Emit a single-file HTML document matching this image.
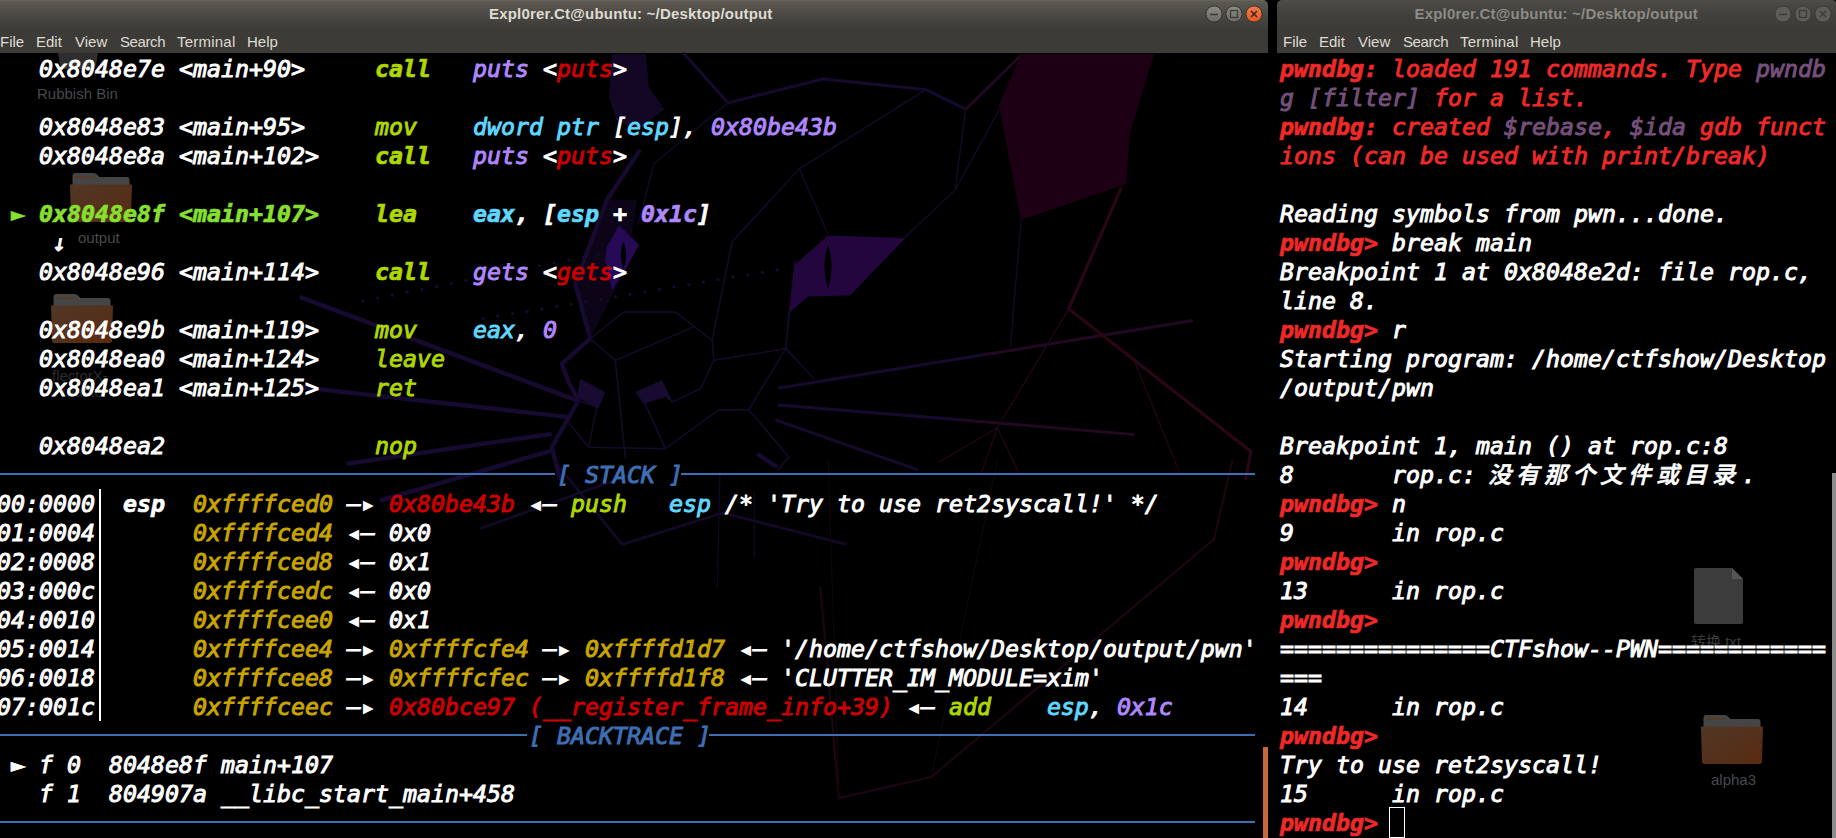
<!DOCTYPE html>
<html lang="en">
<head>
<meta charset="utf-8">
<title>Expl0rer.Ct@ubuntu: ~/Desktop/output</title>
<style>
html,body{margin:0;padding:0;background:#000;}
body{width:1836px;height:838px;position:relative;overflow:hidden;font-family:"Liberation Sans","DejaVu Sans",sans-serif;}
.win{position:absolute;top:0;height:838px;overflow:hidden;}
#w1{left:-5px;width:1273px;}
#w2{left:1277px;width:560px;}
.tb{position:absolute;left:0;right:0;top:0;height:53px;background:linear-gradient(#6a675e 0px,#5e5b53 1px,#4e4c46 12px,#3f3e3a 26px,#3c3b37 29px,#3c3b37 53px);border-radius:5px 5px 0 0;}
#w2 .tb{background:linear-gradient(#4d4c47 0px,#42413d 14px,#3c3b37 28px,#3c3b37 53px);}
.title{position:absolute;top:4px;letter-spacing:0.19px;font-weight:bold;font-size:15px;line-height:20px;color:#dfdbd2;white-space:nowrap;}
#w2 .title{color:#8d8b84;}
.menu{position:absolute;top:32px;left:0;font-size:15px;line-height:20px;color:#dfdbd2;white-space:nowrap;}
.menu span{position:absolute;top:0;}
.menu .ms{letter-spacing:-0.4px;}
.menu .mt{letter-spacing:0.22px;}
.bt{position:absolute;left:0;top:0;}
.wall{position:absolute;left:0;top:0;}
.lbl{position:absolute;font-size:15px;line-height:20px;color:#474a4e;white-space:nowrap;}
#cur{position:absolute;left:1389px;top:807px;width:16px;height:31px;box-sizing:border-box;border:1px solid #fff;}
#sb1{position:absolute;left:1263px;top:747px;width:5px;height:91px;background:#c8663c;}
#sb2{position:absolute;left:1832px;top:473px;width:4px;height:365px;background:#8c8c8c;}
.term{position:absolute;left:0;top:53px;right:0;bottom:0;background:#000;}
.r{position:absolute;white-space:pre;height:29px;line-height:29px;font-family:"DejaVu Sans Mono","Liberation Mono",monospace;font-style:italic;font-size:23.25px;color:#fff;font-weight:normal;}
.r span{-webkit-text-stroke:0.95px currentColor;}
.r .b{font-weight:bold;-webkit-text-stroke:0.7px currentColor;}
.r .hl{display:inline-block;height:29px;vertical-align:top;overflow:hidden;color:transparent;-webkit-text-stroke:0;background:linear-gradient(to bottom,transparent 13px,#3e6fb4 13px,#3e6fb4 15px,transparent 15px);}
.r .vb{display:inline-block;width:14px;height:29px;vertical-align:top;overflow:hidden;color:transparent;-webkit-text-stroke:0;background:linear-gradient(to right,transparent 4px,#fff 4px,#fff 6px,transparent 6px);}
.r .cj{font-family:"Liberation Mono","Noto Sans CJK SC",sans-serif;font-weight:500;font-size:23px;-webkit-text-stroke:0.6px currentColor;}
.cj .k{display:inline-block;width:28px;text-align:left;position:relative;left:-2px;}
</style>
</head>
<body>
<div class="win" id="w1">
  <div class="tb">
    <div class="title" style="left:494px">Expl0rer.Ct@ubuntu: ~/Desktop/output</div>
    <div class="menu"><span style="left:5px">File</span><span style="left:41px">Edit</span><span style="left:80px">View</span><span style="left:125px" class="ms">Search</span><span style="left:182px" class="mt">Terminal</span><span style="left:252px">Help</span></div>
  </div>
  <div class="term"></div>
</div>
<div class="win" id="w2">
  <div class="tb">
    <div class="title" style="left:137.500px">Expl0rer.Ct@ubuntu: ~/Desktop/output</div>
    <div class="menu"><span style="left:6px">File</span><span style="left:42px">Edit</span><span style="left:81px">View</span><span style="left:126px" class="ms">Search</span><span style="left:183px" class="mt">Terminal</span><span style="left:253px">Help</span></div>
  </div>
  <div class="term"></div>
</div>
<svg class="bt" width="1836" height="30" viewBox="0 0 1836 30"><defs><linearGradient id="gg" x1="0" y1="0" x2="0" y2="1"><stop offset="0" stop-color="#8e8d85"/><stop offset="1" stop-color="#6b6a63"/></linearGradient><linearGradient id="gc" x1="0" y1="0" x2="0" y2="1"><stop offset="0" stop-color="#f27d50"/><stop offset="1" stop-color="#e6561c"/></linearGradient></defs><circle cx="1214" cy="14" r="8.1" fill="url(#gg)" stroke="#33322e" stroke-width="1"/><path d="M1210 14.5h8" stroke="#3d3c37" stroke-width="1.6" fill="none"/><circle cx="1234" cy="14" r="8.1" fill="url(#gg)" stroke="#33322e" stroke-width="1"/><rect x="1230.5" y="10.5" width="7" height="7" stroke="#3d3c37" stroke-width="1.3" fill="none"/><circle cx="1254" cy="14" r="8.1" fill="url(#gc)" stroke="#33322e" stroke-width="1"/><path d="M1251 11l6 6m0 -6l-6 6" stroke="#3b2416" stroke-width="1.5" fill="none"/><circle cx="1783" cy="14" r="8.1" fill="#5d5c56" stroke="#3a3935" stroke-width="1"/><path d="M1779 14.5h8" stroke="#3e3d39" stroke-width="1.6" fill="none"/><circle cx="1803" cy="14" r="8.1" fill="#5d5c56" stroke="#3a3935" stroke-width="1"/><rect x="1799.5" y="10.5" width="7" height="7" stroke="#3e3d39" stroke-width="1.3" fill="none"/><circle cx="1823" cy="14" r="8.1" fill="#5d5c56" stroke="#3a3935" stroke-width="1"/><path d="M1820 11l6 6m0 -6l-6 6" stroke="#3e3d39" stroke-width="1.5" fill="none"/></svg>
<div id="sb1"></div><div id="sb2"></div>
<svg class="wall" width="1836" height="838" viewBox="0 0 1836 838">
<g transform="translate(300,50) scale(0.5283)">
<polygon points="590,8 655,8 660,70 690,112 640,150 600,135 585,90" fill="#140726"/>
<g fill="none" stroke="#170a2e" stroke-width="5.5">
<path d="M725 5 L810 100 L990 55 L1185 75 L1260 112"/>
<path d="M905 640 L1300 576 M905 672 L1250 700 M900 700 L1170 795"/>
</g>
<g fill="none" stroke="#210922" stroke-width="5.5">
<path d="M1260 112 L1365 10"/><path d="M1300 576 L1690 512 M1250 700 L1580 728"/>
</g>
<g fill="none" stroke="#150a28" stroke-width="2.4">
<path d="M810 100 L670 215 L640 330"/>
<path d="M1185 75 L945 225 L820 360"/>
<path d="M945 225 L1000 350 M1260 112 L1240 265 L1145 355 M1325 110 L1240 265"/>
<path d="M925 495 L920 565 M920 565 L975 625 M1365 320 L1345 560"/>
</g>
<path d="M1555 260 L1455 490 L1800 760 L1790 814" fill="none" stroke="#2a0618" stroke-width="6"/>
<g fill="none" stroke="#220616" stroke-width="2.4"><path d="M1455 490 L1320 715 L1210 780 M1320 715 L1290 800 M1320 715 L1360 800 M1580 590 L1665 800"/></g>
</g>
<g transform="translate(480,200) scale(0.334)">
<polygon points="380,0 470,0 440,200 330,415 285,250" fill="#0b0517"/>
<g fill="none" stroke="#170a30" stroke-width="13" stroke-linejoin="round">
<path d="M479 -150 L380 0 L285 250 L330 415 L245 490 L265 545 L295 600 L215 740 L240 838"/>
<path d="M-540 290 L290 600 M-540 560 L265 650 M-400 790 L215 700 M-300 900 L215 750"/>
<path d="M830 760 L890 800"/>
</g>
<g fill="none" stroke="#160a2b" stroke-width="4.5">
<path d="M330 415 L430 335 L585 335 L695 420 L700 480 L660 565 L575 605 L545 545"/>
<path d="M330 415 L405 480 L640 380 M405 480 L435 770"/>
<path d="M695 420 L755 125 L870 0 M700 480 L915 445 L945 180 M915 445 L958 490"/>
<path d="M915 445 L805 628 L715 628 L555 745 L325 740 L265 665 M805 628 L925 770 L890 810"/>
<path d="M295 600 L350 620 L325 740 M490 600 L555 745"/>
</g>
<g fill="#180a30"><polygon points="300,535 375,575 355,625 290,590"/><polygon points="465,575 545,540 575,605 555,590 490,610"/></g>
</g>
<g fill="#180a30"><circle cx="363.0" cy="301.0" r="1.6"/><circle cx="377.7" cy="298.1" r="1.6"/><circle cx="392.4" cy="295.2" r="1.6"/><circle cx="407.1" cy="292.2" r="1.6"/><circle cx="421.8" cy="289.3" r="1.6"/><circle cx="436.5" cy="286.4" r="1.6"/><circle cx="451.2" cy="283.5" r="1.6"/><circle cx="465.9" cy="280.6" r="1.6"/><circle cx="480.6" cy="277.6" r="1.6"/><circle cx="495.3" cy="274.7" r="1.6"/><circle cx="510.0" cy="271.8" r="1.6"/><circle cx="524.7" cy="268.9" r="1.6"/><circle cx="539.4" cy="266.0" r="1.6"/><circle cx="554.1" cy="263.0" r="1.6"/><circle cx="568.8" cy="260.1" r="1.6"/><circle cx="583.5" cy="257.2" r="1.6"/><circle cx="598.2" cy="254.3" r="1.6"/><circle cx="483.0" cy="318.6" r="1.6"/><circle cx="497.7" cy="316.2" r="1.6"/><circle cx="512.4" cy="313.7" r="1.6"/><circle cx="527.1" cy="311.3" r="1.6"/><circle cx="541.8" cy="308.9" r="1.6"/><circle cx="556.5" cy="306.4" r="1.6"/><circle cx="571.2" cy="304.0" r="1.6"/><circle cx="585.9" cy="301.6" r="1.6"/><circle cx="600.6" cy="299.1" r="1.6"/><circle cx="615.3" cy="296.7" r="1.6"/><circle cx="630.0" cy="294.3" r="1.6"/><circle cx="644.7" cy="291.8" r="1.6"/><circle cx="659.4" cy="289.4" r="1.6"/><circle cx="674.1" cy="287.0" r="1.6"/><circle cx="688.8" cy="284.5" r="1.6"/><circle cx="703.5" cy="282.1" r="1.6"/><circle cx="718.2" cy="279.7" r="1.6"/><circle cx="732.9" cy="277.2" r="1.6"/><circle cx="747.6" cy="274.8" r="1.6"/><circle cx="762.3" cy="272.4" r="1.6"/><circle cx="777.0" cy="269.9" r="1.6"/></g>
<g transform="translate(300,460) scale(0.5283)">
<g fill="none" stroke="#140928" stroke-width="5"><path d="M340 130 L620 30 M480 0 L610 160 L800 100 L1035 160"/></g>
<g fill="none" stroke="#130826" stroke-width="2.2"><path d="M795 20 L790 240 M860 60 L860 185"/></g>
<path d="M985 240 L1020 640 L1195 600 L1730 150 L1765 0" fill="none" stroke="#1d0514" stroke-width="4"/>
<path d="M1320 0 L1195 600 M1000 0 L1020 640" fill="none" stroke="#16040f" stroke-width="2"/>
</g>
<polygon points="607,247 619,225 639,245 627,267 612,290 605,260" fill="#270a55"/>
<path d="M623.500 241 Q629 255 623.500 269 Q618 255 623.500 241Z" fill="#000"/>
<polygon points="828,235.5 905.5,238 850,295.5 808,296.5 789,313 794,265.5" fill="#22063d"/>
<path d="M828 245 Q835 267 828 289 Q821 267 828 245Z" fill="#000"/>
<polygon points="1021,54 1154,54 1130,133 1126,184 1021,220 999,105" fill="#1e0014"/>
</svg>
<svg class="wall" width="1836" height="838" viewBox="0 0 1836 838">
<defs><linearGradient id="fb" x1="0" y1="0" x2="1" y2="1"><stop offset="0" stop-color="#4f3826"/><stop offset="1" stop-color="#5a2a10"/></linearGradient></defs>
<g id="fold"><path d="M72.5 176 q0 -3 3 -3 h18 q2 0 3.5 1.5 l2.5 2.5 h27 q3 0 3 3 v8 h-57z" fill="#454545"/><rect x="75" y="176" width="19" height="1.6" fill="#5a3a24"/><path d="M70 184.5 h62 l-1 35 q0 2.5 -2.5 2.5 h-55 q-2.500 0 -2.500 -2.500z" fill="url(#fb)"/></g>
<use href="#fold" x="-19" y="121"/>
<use href="#fold" x="1631" y="542"/>
<path d="M58 53 h40 l-2 12 q-1 4 -5 4 h-26 q-4 0 -5 -4z" fill="#2e2e2e"/>
<path d="M1696 568 h36 l11 11 v43 q0 2 -2 2 h-45 q-2 0 -2 -2 v-52 q0 -2 2 -2z" fill="#3c3c3c"/><path d="M1732 568 l11 11 h-11z" fill="#555"/>
</svg>
<div class="lbl" style="left:37px;top:84px;">Rubbish Bin</div>
<div class="lbl" style="left:78px;top:228px;">output</div>
<div class="lbl" style="left:52px;top:366px;color:#2c2c2c">flectorX-</div>
<div class="lbl" style="left:62px;top:382px;color:#262626">master</div>
<div class="lbl" style="left:1711px;top:770px;">alpha3</div>
<div class="lbl" style="left:1691px;top:632px;color:#3a3a3a;font-family:'Liberation Sans','Noto Sans CJK SC',sans-serif">转换.txt</div>
<div class="r" style="left:-3px;top:54px"><span>   0x8048e7e &lt;main+90&gt; </span><span>    </span><span class="b" style="color:#afd700">call   </span><span style="color:#af87ff">puts</span><span> </span><span>&lt;</span><span style="color:#cc0000">puts</span><span>&gt;</span></div>
<div class="r" style="left:-3px;top:112px"><span>   0x8048e83 &lt;main+95&gt; </span><span>    </span><span style="color:#afd700">mov    </span><span style="color:#5fd7ff">dword ptr</span><span> [</span><span style="color:#5fd7ff">esp</span><span>], </span><span style="color:#af87ff">0x80be43b</span></div>
<div class="r" style="left:-3px;top:141px"><span>   0x8048e8a &lt;main+102&gt;</span><span>    </span><span class="b" style="color:#afd700">call   </span><span style="color:#af87ff">puts</span><span> </span><span>&lt;</span><span style="color:#cc0000">puts</span><span>&gt;</span></div>
<div class="r" style="left:-3px;top:199px"><span> </span><span class="b" style="color:#87e02f">►</span><span> </span><span class="b" style="color:#87e02f">0x8048e8f &lt;main+107&gt;</span><span>    </span><span class="b" style="color:#afd700">lea    </span><span class="b" style="color:#5fd7ff">eax</span><span class="b">, [</span><span class="b" style="color:#5fd7ff">esp</span><span class="b"> + </span><span class="b" style="color:#af87ff">0x1c</span><span class="b">]</span></div>
<div class="r" style="left:-3px;top:228px"><span>    </span><span style="display:inline-block;transform:skewX(-11deg)">↓</span></div>
<div class="r" style="left:-3px;top:257px"><span>   0x8048e96 &lt;main+114&gt;</span><span>    </span><span class="b" style="color:#afd700">call   </span><span style="color:#af87ff">gets</span><span> </span><span>&lt;</span><span style="color:#cc0000">gets</span><span>&gt;</span></div>
<div class="r" style="left:-3px;top:315px"><span>   0x8048e9b &lt;main+119&gt;</span><span>    </span><span style="color:#afd700">mov    </span><span style="color:#5fd7ff">eax</span><span>, </span><span style="color:#af87ff">0</span></div>
<div class="r" style="left:-3px;top:344px"><span>   0x8048ea0 &lt;main+124&gt;</span><span>    </span><span style="color:#afd700">leave  </span></div>
<div class="r" style="left:-3px;top:373px"><span>   0x8048ea1 &lt;main+125&gt;</span><span>    </span><span style="color:#afd700">ret    </span></div>
<div class="r" style="left:-3px;top:431px"><span>   0x8048ea2           </span><span>    </span><span style="color:#afd700">nop    </span></div>
<div class="r" style="left:-3px;top:460px"><span class="hl" style="width:560px;margin-left:-2px;margin-right:2px">────────────────────────────────────────</span><span style="color:#3e6fb4">[ STACK ]</span><span class="hl" style="width:574px;margin-left:-2px;margin-right:2px">─────────────────────────────────────────</span></div>
<div class="r" style="left:-3px;top:489px"><span>00:0000</span><span class="vb">│</span><span> </span><span class="b">esp  </span><span style="color:#c9a500">0xffffced0</span><span> —▸ </span><span style="color:#cc0000">0x80be43b</span><span> ◂— </span><span style="color:#afd700">push   </span><span style="color:#5fd7ff">esp</span><span> /* 'Try to use ret2syscall!' */</span></div>
<div class="r" style="left:-3px;top:518px"><span>01:0004</span><span class="vb">│</span><span> </span><span class="b">     </span><span style="color:#c9a500">0xffffced4</span><span> ◂— </span><span>0x0</span></div>
<div class="r" style="left:-3px;top:547px"><span>02:0008</span><span class="vb">│</span><span> </span><span class="b">     </span><span style="color:#c9a500">0xffffced8</span><span> ◂— </span><span>0x1</span></div>
<div class="r" style="left:-3px;top:576px"><span>03:000c</span><span class="vb">│</span><span> </span><span class="b">     </span><span style="color:#c9a500">0xffffcedc</span><span> ◂— </span><span>0x0</span></div>
<div class="r" style="left:-3px;top:605px"><span>04:0010</span><span class="vb">│</span><span> </span><span class="b">     </span><span style="color:#c9a500">0xffffcee0</span><span> ◂— </span><span>0x1</span></div>
<div class="r" style="left:-3px;top:634px"><span>05:0014</span><span class="vb">│</span><span> </span><span class="b">     </span><span style="color:#c9a500">0xffffcee4</span><span> —▸ </span><span style="color:#c9a500">0xffffcfe4</span><span> —▸ </span><span style="color:#c9a500">0xffffd1d7</span><span> ◂— </span><span>'/home/ctfshow/Desktop/output/pwn'</span></div>
<div class="r" style="left:-3px;top:663px"><span>06:0018</span><span class="vb">│</span><span> </span><span class="b">     </span><span style="color:#c9a500">0xffffcee8</span><span> —▸ </span><span style="color:#c9a500">0xffffcfec</span><span> —▸ </span><span style="color:#c9a500">0xffffd1f8</span><span> ◂— </span><span>'CLUTTER_IM_MODULE=xim'</span></div>
<div class="r" style="left:-3px;top:692px"><span>07:001c</span><span class="vb">│</span><span> </span><span class="b">     </span><span style="color:#c9a500">0xffffceec</span><span> —▸ </span><span style="color:#cc0000">0x80bce97 (__register_frame_info+39)</span><span> ◂— </span><span style="color:#afd700">add    </span><span style="color:#5fd7ff">esp</span><span>, </span><span style="color:#af87ff">0x1c</span></div>
<div class="r" style="left:-3px;top:721px"><span class="hl" style="width:532px;margin-left:-2px;margin-right:2px">──────────────────────────────────────</span><span style="color:#3e6fb4">[ BACKTRACE ]</span><span class="hl" style="width:546px;margin-left:-2px;margin-right:2px">───────────────────────────────────────</span></div>
<div class="r" style="left:-3px;top:750px"><span> ► f 0  8048e8f main+107</span></div>
<div class="r" style="left:-3px;top:779px"><span>   f 1  804907a __libc_start_main+458</span></div>
<div class="r" style="left:-3px;top:808px"><span class="hl" style="width:1260px;margin-left:-2px;margin-right:2px">──────────────────────────────────────────────────────────────────────────────────────────</span></div>
<div class="r" style="left:1280px;top:54px"><span class="b" style="color:#ef2929">pwndbg: </span><span style="color:#ef2929">loaded 191 commands. Type </span><span style="color:#75507b">pwndb</span></div>
<div class="r" style="left:1280px;top:83px"><span style="color:#75507b">g [filter]</span><span style="color:#ef2929"> for a list.</span></div>
<div class="r" style="left:1280px;top:112px"><span class="b" style="color:#ef2929">pwndbg: </span><span style="color:#ef2929">created </span><span style="color:#75507b">$rebase</span><span style="color:#ef2929">, </span><span style="color:#75507b">$ida</span><span style="color:#ef2929"> gdb funct</span></div>
<div class="r" style="left:1280px;top:141px"><span style="color:#ef2929">ions (can be used with print/break)</span></div>
<div class="r" style="left:1280px;top:199px"><span>Reading symbols from pwn...done.</span></div>
<div class="r" style="left:1280px;top:228px"><span class="b" style="color:#ef2929">pwndbg&gt; </span><span>break main</span></div>
<div class="r" style="left:1280px;top:257px"><span>Breakpoint 1 at 0x8048e2d: file rop.c, </span></div>
<div class="r" style="left:1280px;top:286px"><span>line 8.</span></div>
<div class="r" style="left:1280px;top:315px"><span class="b" style="color:#ef2929">pwndbg&gt; </span><span>r</span></div>
<div class="r" style="left:1280px;top:344px"><span>Starting program: /home/ctfshow/Desktop</span></div>
<div class="r" style="left:1280px;top:373px"><span>/output/pwn</span></div>
<div class="r" style="left:1280px;top:431px"><span>Breakpoint 1, main () at rop.c:8</span></div>
<div class="r" style="left:1280px;top:460px"><span>8       rop.c: </span><span class="cj" style="color:#ffffff"><i class="k">没</i><i class="k">有</i><i class="k">那</i><i class="k">个</i><i class="k">文</i><i class="k">件</i><i class="k">或</i><i class="k">目</i><i class="k">录</i></span><span>.</span></div>
<div class="r" style="left:1280px;top:489px"><span class="b" style="color:#ef2929">pwndbg&gt; </span><span>n</span></div>
<div class="r" style="left:1280px;top:518px"><span>9       in rop.c</span></div>
<div class="r" style="left:1280px;top:547px"><span class="b" style="color:#ef2929">pwndbg&gt; </span></div>
<div class="r" style="left:1280px;top:576px"><span>13      in rop.c</span></div>
<div class="r" style="left:1280px;top:605px"><span class="b" style="color:#ef2929">pwndbg&gt; </span></div>
<div class="r" style="left:1280px;top:634px"><span>===============CTFshow--PWN============</span></div>
<div class="r" style="left:1280px;top:663px"><span>===</span></div>
<div class="r" style="left:1280px;top:692px"><span>14      in rop.c</span></div>
<div class="r" style="left:1280px;top:721px"><span class="b" style="color:#ef2929">pwndbg&gt; </span></div>
<div class="r" style="left:1280px;top:750px"><span>Try to use ret2syscall!</span></div>
<div class="r" style="left:1280px;top:779px"><span>15      in rop.c</span></div>
<div class="r" style="left:1280px;top:808px"><span class="b" style="color:#ef2929">pwndbg&gt; </span></div>
<div id="cur"></div>
</body>
</html>
